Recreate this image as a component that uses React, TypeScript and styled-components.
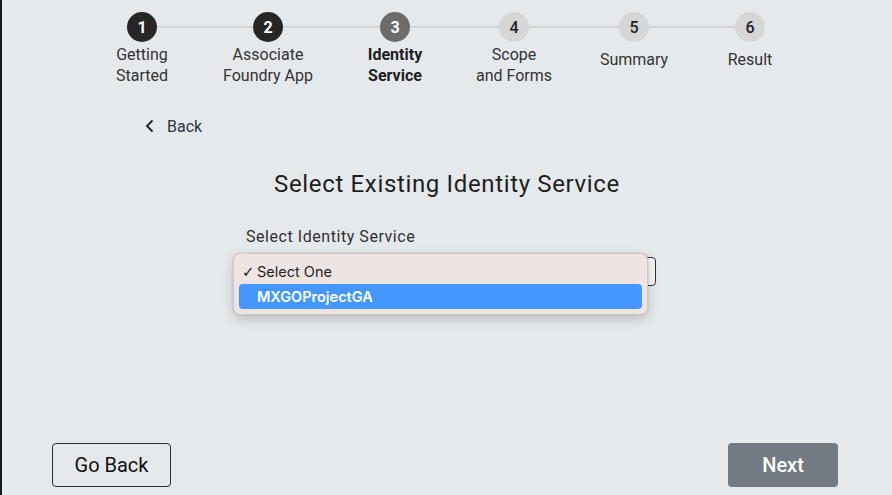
import React from "react";
import styled, { createGlobalStyle } from "styled-components";

const Global = createGlobalStyle`
  html, body { margin: 0; padding: 0; background: #e6e9ec; }
  body { font-family: Roboto, "Liberation Sans", sans-serif; }
  * { box-sizing: border-box; }
`;

const Page = styled.div`
  width: 892px;
  height: 495px;
  background: #e6e9ec;
  border-left: 2px solid #1b1b1b;
  display: flex;
  flex-direction: column;
  overflow: hidden;
  color: #2b2b2b;
`;

const Stepper = styled.div`
  position: relative;
  display: grid;
  grid-template-columns: 120px 132px 122px 116px 124px 108px;
  margin: 12px 0 0 80px;
  align-self: flex-start;
`;

const Track = styled.div`
  position: absolute;
  top: 14px;
  left: 60px;
  right: 54px;
  height: 2px;
  background: #d3d4d6;
`;

const Step = styled.div`
  position: relative;
  display: flex;
  flex-direction: column;
  align-items: center;
`;

const Circle = styled.div<{ $state: "done" | "active" | "todo" }>`
  width: 30px;
  height: 30px;
  border-radius: 50%;
  display: flex;
  align-items: center;
  justify-content: center;
  font-size: 16px;
  font-weight: ${(p) => (p.$state === "todo" ? 500 : 700)};
  background: ${(p) =>
    p.$state === "done" ? "#262626" : p.$state === "active" ? "#6c6c6c" : "#d6d6d6"};
  color: ${(p) => (p.$state === "todo" ? "#222" : "#fff")};
`;

const StepLabel = styled.div<{ $active?: boolean; $single?: boolean }>`
  margin-top: ${(p) => (p.$single ? "7px" : "2px")};
  font-size: 16px;
  line-height: 21px;
  text-align: center;
  white-space: nowrap;
  font-weight: ${(p) => (p.$active ? 700 : 400)};
  color: ${(p) => (p.$active ? "#1e1e1e" : "#333")};
`;

const BackLink = styled.div`
  display: flex;
  align-items: center;
  gap: 11px;
  margin: 30px 0 0 142px;
  font-size: 16px;
  color: #2c3440;
  height: 20px;
`;

const Title = styled.h1`
  margin: 34px 0 0;
  text-align: center;
  font-size: 24px;
  letter-spacing: 0.65px;
  font-weight: 400;
  color: #1e1e1e;
  line-height: 28px;
`;

const Field = styled.div`
  position: relative;
  margin: 29px 0 0 235px;
  width: 419px;
`;

const FieldLabel = styled.div`
  font-size: 16px;
  letter-spacing: 0.55px;
  color: #2f2f2f;
  line-height: 20px;
  padding-left: 9px;
`;

const SelectBox = styled.div`
  margin-top: 10px;
  height: 29px;
  border: 1px solid #2a2f36;
  border-radius: 4px;
  background: #f6f6f6;
`;

const Menu = styled.div`
  position: absolute;
  top: 26px;
  left: -4px;
  width: 415px;
  padding: 5px;
  background: #ede4e3;
  border-radius: 7px;
  border: 1px solid rgba(0, 0, 0, 0.12);
  box-shadow: 0 4px 12px rgba(0, 0, 0, 0.18), 0 0 2px rgba(0, 0, 0, 0.15);
  font-family: Inter, Roboto, sans-serif;
  font-size: 14.5px;
`;

const Option = styled.div<{ $hl?: boolean }>`
  height: 25px;
  display: flex;
  align-items: center;
  padding-left: 3px;
  border-radius: 4px;
  background: ${(p) => (p.$hl ? "#4597fd" : "transparent")};
  color: ${(p) => (p.$hl ? "#fff" : "#1f1f1f")};
  font-weight: ${(p) => (p.$hl ? 600 : 400)};
`;

const Check = styled.span`
  width: 15px;
  display: inline-block;
  font-size: 15px;
  font-family: "DejaVu Sans", sans-serif;
`;

const Footer = styled.div`
  margin-top: auto;
  display: flex;
  justify-content: space-between;
  padding: 0 54px 8px 50px;
`;

const Button = styled.button<{ $primary?: boolean }>`
  height: 44px;
  width: ${(p) => (p.$primary ? "110px" : "119px")};
  border-radius: 4px;
  font-family: Roboto, sans-serif;
  font-size: 20px;
  border: ${(p) => (p.$primary ? "none" : "1px solid #2b3036")};
  background: ${(p) => (p.$primary ? "#737b82" : "transparent")};
  color: ${(p) => (p.$primary ? "#fff" : "#111")};
  font-weight: ${(p) => (p.$primary ? 500 : 400)};
`;

const steps: { n: number; label: string[]; state: "done" | "active" | "todo" }[] = [
  { n: 1, label: ["Getting", "Started"], state: "done" },
  { n: 2, label: ["Associate", "Foundry App"], state: "done" },
  { n: 3, label: ["Identity", "Service"], state: "active" },
  { n: 4, label: ["Scope", "and Forms"], state: "todo" },
  { n: 5, label: ["Summary"], state: "todo" },
  { n: 6, label: ["Result"], state: "todo" },
];

export default function App() {
  return (
    <>
      <Global />
      <Page>
        <Stepper>
          <Track />
          {steps.map((s) => (
            <Step key={s.n}>
              <Circle $state={s.state}>{s.n}</Circle>
              <StepLabel $active={s.state === "active"} $single={s.label.length === 1}>
                {s.label.map((l, i) => (
                  <div key={i}>{l}</div>
                ))}
              </StepLabel>
            </Step>
          ))}
        </Stepper>
        <BackLink>
          <svg width="12" height="14" viewBox="0 0 12 14" fill="none">
            <path d="M8.5 1.5 L3 7 L8.5 12.5" stroke="#1d1d1d" strokeWidth="1.8" />
          </svg>
          Back
        </BackLink>
        <Title>Select Existing Identity Service</Title>
        <Field>
          <FieldLabel>Select Identity Service</FieldLabel>
          <SelectBox />
          <Menu>
            <Option>
              <Check>✓</Check>Select One
            </Option>
            <Option $hl>
              <Check />MXGOProjectGA
            </Option>
          </Menu>
        </Field>
        <Footer>
          <Button>Go Back</Button>
          <Button $primary>Next</Button>
        </Footer>
      </Page>
    </>
  );
}
